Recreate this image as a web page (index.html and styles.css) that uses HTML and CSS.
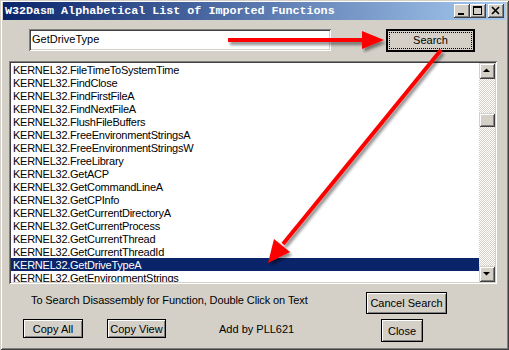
FILE: index.html
```html
<!DOCTYPE html>
<html lang="en">

<head>
	<meta charset="UTF-8">
	<title>W32Dasm Alphabetical List of Imported Functions</title>
	<link rel="stylesheet" href="styles.css">
</head>

<body>
	<div class="window">
		<div class="titlebar">
			<span class="title">W32Dasm Alphabetical List of Imported Functions</span>
			<div class="caption-buttons">
				<span class="cap-btn">
					<svg width="16" height="14" viewBox="0 0 16 14"><rect x="4" y="9" width="6" height="2" fill="#000"/></svg>
				</span>
				<span class="cap-btn">
					<svg width="16" height="14" viewBox="0 0 16 14"><path d="M3 2h9v9H3z M4 4v6h7V4z" fill="#000" fill-rule="evenodd"/></svg>
				</span>
				<span class="cap-btn cap-close">
					<svg width="16" height="14" viewBox="0 0 16 14"><path d="M4 3l7 7M11 3l-7 7" stroke="#000" stroke-width="1.7"/></svg>
				</span>
			</div>
		</div>

		<!-- Busqueda -->
		<div class="search-row">
			<div class="field">GetDriveType</div>
			<button class="btn btn-default"><span class="focus">Search</span></button>
		</div>

		<!-- Lista -->
		<div class="listbox">
			<ul class="items">
				<li>KERNEL32.FileTimeToSystemTime</li>
				<li>KERNEL32.FindClose</li>
				<li>KERNEL32.FindFirstFileA</li>
				<li>KERNEL32.FindNextFileA</li>
				<li>KERNEL32.FlushFileBuffers</li>
				<li>KERNEL32.FreeEnvironmentStringsA</li>
				<li>KERNEL32.FreeEnvironmentStringsW</li>
				<li>KERNEL32.FreeLibrary</li>
				<li>KERNEL32.GetACP</li>
				<li>KERNEL32.GetCommandLineA</li>
				<li>KERNEL32.GetCPInfo</li>
				<li>KERNEL32.GetCurrentDirectoryA</li>
				<li>KERNEL32.GetCurrentProcess</li>
				<li>KERNEL32.GetCurrentThread</li>
				<li>KERNEL32.GetCurrentThreadId</li>
				<li class="selected">KERNEL32.GetDriveTypeA</li>
				<li>KERNEL32.GetEnvironmentStrings</li>
			</ul>
			<div class="scrollbar">
				<div class="sb-btn">
					<svg width="16" height="16" viewBox="0 0 16 16"><path d="M4 9h7L7.5 5.5z" fill="#000"/></svg>
				</div>
				<div class="sb-track"><div class="sb-thumb"></div></div>
				<div class="sb-btn">
					<svg width="16" height="16" viewBox="0 0 16 16"><path d="M4 6h7L7.5 9.5z" fill="#000"/></svg>
				</div>
			</div>
		</div>

		<!-- Pie -->
		<div class="footer-row">
			<span class="hint">To Search Disassembly for Function, Double Click on Text</span>
			<button class="btn btn-cancel">Cancel Search</button>
		</div>
		<div class="footer-row footer-row-2">
			<button class="btn btn-copy-all">Copy All</button>
			<button class="btn btn-copy-view">Copy View</button>
			<span class="credit">Add by PLL621</span>
			<button class="btn btn-close">Close</button>
		</div>

		<svg class="arrows" width="509" height="350" viewBox="0 0 509 350">
			<defs>
				<filter id="shadow" x="-20%" y="-20%" width="140%" height="140%">
					<feDropShadow dx="2" dy="3" stdDeviation="1.6" flood-color="#000" flood-opacity="0.45"/>
				</filter>
			</defs>
			<g filter="url(#shadow)" fill="#ff0000" stroke="#ff0000">
				<line x1="228" y1="40" x2="365" y2="40" stroke-width="4"/>
				<polygon points="362,31 384,40 362,49" stroke="none"/>
				<line x1="441" y1="50" x2="283" y2="244" stroke-width="4"/>
				<polygon points="268,263 290,252 274,239" stroke="none"/>
			</g>
		</svg>
	</div>
</body>

</html>
```

FILE: styles.css
```css
body {
	margin: 0;
	background-color: #d4d0c8;
	font-family: "Liberation Sans", Arial, sans-serif;
	font-size: 11px;
	color: #000;
}

.window {
	position: relative;
	width: 509px;
	height: 350px;
	box-sizing: border-box;
	padding: 2px 3px 3px 3px;
	background: #d4d0c8;
	box-shadow: inset 1px 1px #d4d0c8, inset -1px -1px #404040, inset 2px 2px #fff, inset -2px -2px #808080;
}

.titlebar {
	display: flex;
	align-items: center;
	height: 18px;
	padding: 0 2px 0 2px;
	background: linear-gradient(to right, #0a246a, #a6caf0);
	color: #fff;
}

.title {
	font-family: "Liberation Mono", "Courier New", monospace;
	font-weight: bold;
	font-size: 11.7px;
	white-space: nowrap;
}

.caption-buttons {
	display: flex;
	margin-left: auto;
}

.cap-btn {
	display: block;
	width: 16px;
	height: 14px;
	background: #d4d0c8;
	box-shadow: inset -1px -1px #404040, inset 1px 1px #fff, inset -2px -2px #808080;
}

.cap-btn svg {
	display: block;
}

.cap-close {
	margin-left: 2px;
}

.search-row {
	display: flex;
	align-items: flex-start;
	margin-top: 9px;
	padding-left: 26px;
}

.field {
	width: 302px;
	height: 22px;
	box-sizing: border-box;
	padding-left: 3px;
	line-height: 21px;
	background: #fff;
	box-shadow: inset 1px 1px #808080, inset -1px -1px #fff, inset 2px 2px #404040, inset -2px -2px #d4d0c8;
}

.btn {
	display: block;
	box-sizing: border-box;
	padding: 0;
	margin: 0;
	border: 1px solid #000;
	background: #d4d0c8;
	box-shadow: inset 1px 1px #fff, inset -1px -1px #808080;
	font: inherit;
	color: #000;
	text-align: center;
}

.btn-default {
	width: 89px;
	height: 23px;
	margin-left: 55px;
	border-width: 2px;
	padding: 1px;
	box-shadow: none;
}

.btn-default .focus {
	display: block;
	height: 100%;
	box-sizing: border-box;
	border: 1px dotted #000;
	line-height: 15px;
}

.listbox {
	display: flex;
	width: 488px;
	height: 223px;
	box-sizing: border-box;
	margin: 9px 0 0 6px;
	padding: 2px;
	background: #fff;
	box-shadow: inset 1px 1px #808080, inset -1px -1px #fff, inset 2px 2px #404040, inset -2px -2px #d4d0c8;
}

.items {
	flex: 1;
	margin: 0;
	padding: 0;
	list-style: none;
	overflow: hidden;
	letter-spacing: -0.25px;
}

.items li {
	height: 13px;
	padding-left: 2px;
	line-height: 14px;
	white-space: nowrap;
}

.items li.selected {
	background: #0a246a;
	color: #fff;
}

.scrollbar {
	display: flex;
	flex-direction: column;
	width: 16px;
}

.sb-btn,
.sb-thumb {
	height: 16px;
	box-sizing: border-box;
	background: #d4d0c8;
	box-shadow: inset 1px 1px #d4d0c8, inset -1px -1px #404040, inset 2px 2px #fff, inset -2px -2px #808080;
}

.sb-btn svg {
	display: block;
}

.sb-track {
	flex: 1;
	background: repeating-conic-gradient(#d4d0c8 0 25%, #fff 0 50%) 0 0 / 2px 2px;
}

.sb-thumb {
	height: 14px;
	margin-top: 34px;
}

.footer-row {
	display: flex;
	align-items: flex-start;
	margin-top: 8px;
}

.hint {
	margin-left: 28px;
	margin-top: 2px;
	line-height: 13px;
	letter-spacing: -0.1px;
}

.btn-cancel {
	width: 81px;
	height: 22px;
	margin-left: auto;
	margin-right: 59px;
}

.footer-row-2 {
	margin-top: 5px;
}

.btn-copy-all {
	width: 60px;
	height: 19px;
	margin-left: 20px;
}

.btn-copy-view {
	width: 59px;
	height: 19px;
	margin-left: 24px;
}

.credit {
	margin-left: 53px;
	line-height: 20px;
}

.btn-close {
	width: 42px;
	height: 23px;
	margin-left: auto;
	margin-right: 83px;
}

.arrows {
	position: absolute;
	top: 0;
	left: 0;
	pointer-events: none;
}
```
